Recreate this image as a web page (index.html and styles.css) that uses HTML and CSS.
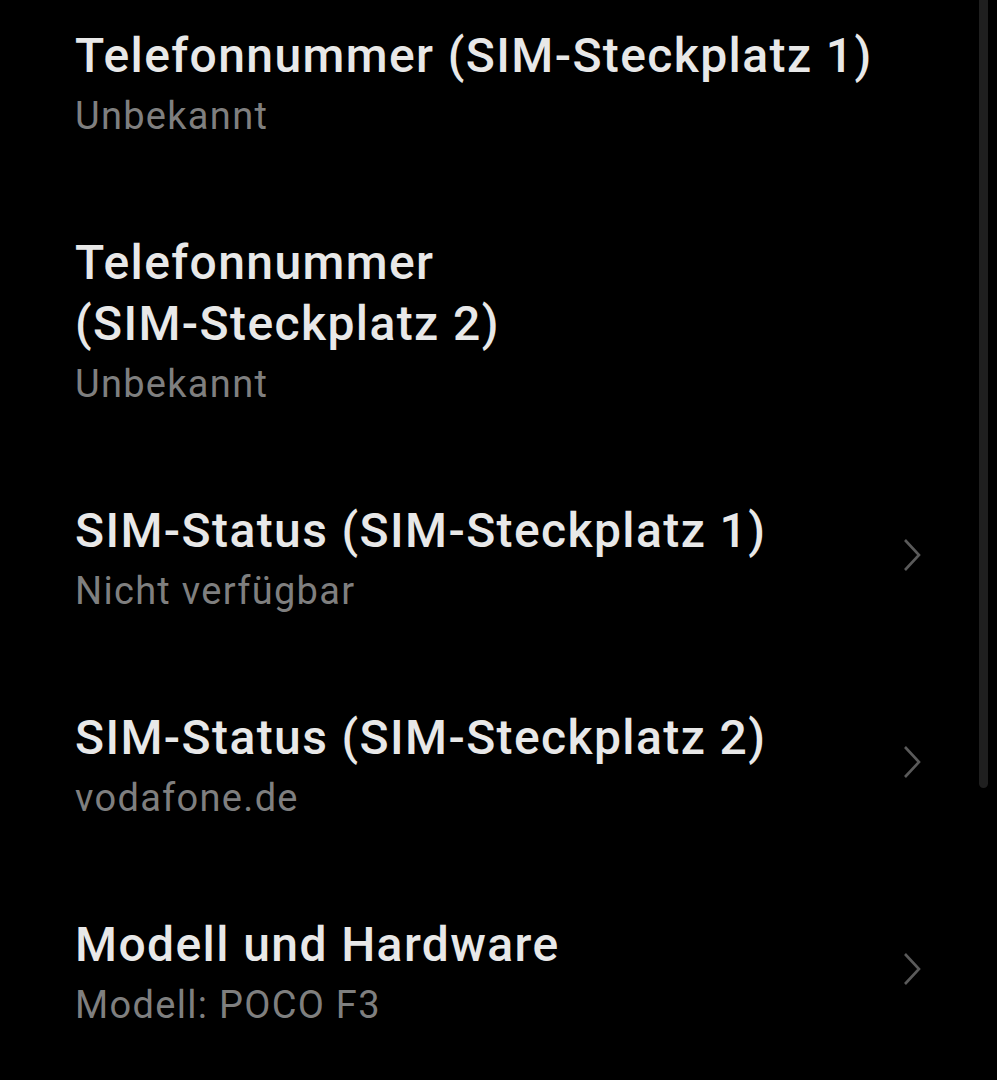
FILE: index.html
```html
<!DOCTYPE html>
<html lang="de">
<head>
  <meta charset="UTF-8">
  <meta name="viewport" content="width=device-width, initial-scale=1.0">
  <title>Über das Telefon</title>
  <link rel="stylesheet" href="styles.css">
</head>
<body>
  <div class="list">
    <div class="row">
      <div class="text">
        <div class="title">Telefonnummer (SIM-Steckplatz 1)</div>
        <div class="sub">Unbekannt</div>
      </div>
    </div>

    <div class="row">
      <div class="text">
        <div class="title narrow">Telefonnummer (SIM-Steckplatz 2)</div>
        <div class="sub">Unbekannt</div>
      </div>
    </div>

    <div class="row">
      <div class="text">
        <div class="title">SIM-Status (SIM-Steckplatz 1)</div>
        <div class="sub">Nicht verfügbar</div>
      </div>
      <svg class="chevron" viewBox="0 0 18 34"><path d="M2 2 L16 17 L2 32"/></svg>
    </div>

    <div class="row">
      <div class="text">
        <div class="title">SIM-Status (SIM-Steckplatz 2)</div>
        <div class="sub">vodafone.de</div>
      </div>
      <svg class="chevron" viewBox="0 0 18 34"><path d="M2 2 L16 17 L2 32"/></svg>
    </div>

    <div class="row">
      <div class="text">
        <div class="title">Modell und Hardware</div>
        <div class="sub">Modell: POCO F3</div>
      </div>
      <svg class="chevron" viewBox="0 0 18 34"><path d="M2 2 L16 17 L2 32"/></svg>
    </div>
  </div>

  <!-- scroll indicator -->
  <div class="scrollbar"></div>
</body>
</html>
```

FILE: styles.css
```css
/* Page */
body {
  margin: 0;
  background: #000;
  font-family: Roboto, "Noto Sans", sans-serif;
  overflow: hidden;
}

/* List of settings rows (page is scrolled a bit) */
.list {
  margin-top: -20px;
}

.row {
  display: flex;
  align-items: center;
  padding: 45px 76px 47px 75px;
}

.text {
  flex: 1;
}

.title {
  font-size: 48px;
  font-weight: 500;
  line-height: 61px;
  letter-spacing: 1.4px;
  color: #e8e8e8;
}

.title.narrow {
  max-width: 450px;
}

.sub {
  margin-top: 6px;
  font-size: 38px;
  line-height: 48px;
  letter-spacing: 1.3px;
  color: #7f7f7f;
}

/* Arrow on the right */
.chevron {
  width: 18px;
  height: 34px;
  margin-top: -6px;
  fill: none;
  stroke: #5a5a5a;
  stroke-width: 2.6;
}

/* Scroll indicator */
.scrollbar {
  position: absolute;
  top: 0;
  left: 979px;
  width: 9px;
  height: 788px;
  background: #1f1f1f;
  border-radius: 0 0 5px 5px;
}
```
